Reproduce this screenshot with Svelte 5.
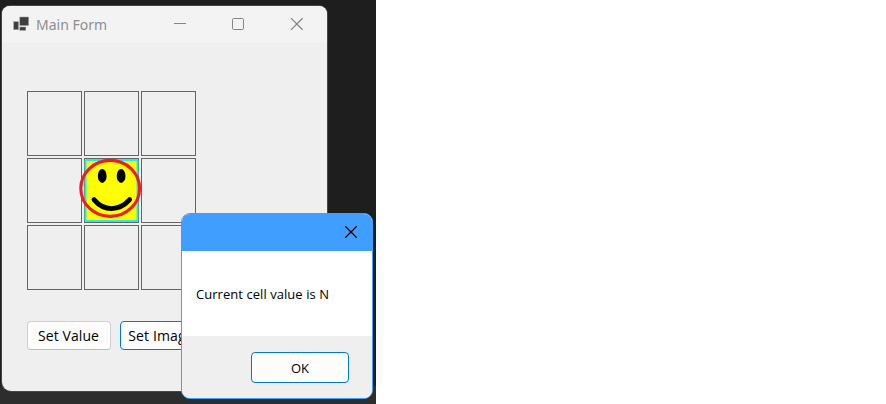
<script>
  const cells = Array.from({ length: 9 }, (_, i) => i);
</script>

<main class="page">
  <div class="desktop">
    <section class="window">
      <header class="titlebar">
        <svg class="appicon" width="17" height="17" viewBox="0 0 17 17">
          <g fill="#3f3f3f" stroke="#a0a0a0" stroke-width=".5">
            <rect x=".7" y="5.7" width="4.8" height="8" />
            <rect x="6.8" y="1" width="8.8" height="8.5" />
            <rect x="6.8" y="11" width="6" height="3.4" />
          </g>
        </svg>
        <span class="title">Main Form</span>
        <svg class="controls" width="130" height="14" viewBox="0 0 130 14" fill="none" stroke="#858585">
          <path d="M1 6.5h12" />
          <rect x="59.5" y="1.5" width="11" height="11" rx="1.2" />
          <path d="M118 1.2l11.6 11.6M129.6 1.2L118 12.8" stroke-width="1.2" />
        </svg>
      </header>
      <div class="grid">
        {#each cells as i}
          <div class="cell">
            {#if i === 4}
              <svg class="face" width="64" height="67" viewBox="0 0 64 67">
                <rect x="7.5" y="3" width="52" height="61" rx="1" fill="#ff0" stroke="#21eee6" stroke-width="2" />
                <ellipse cx="32.2" cy="31.4" rx="29.4" ry="28" fill="none" stroke="#ed1c24" stroke-width="3.1" />
                <ellipse cx="24.2" cy="18.9" rx="4.4" ry="7" />
                <ellipse cx="43.1" cy="18.9" rx="4.4" ry="7" />
                <path d="M16 42.6C26 54.5 41 54.5 51.6 42.6" fill="none" stroke="#000" stroke-width="4.8" stroke-linecap="round" />
              </svg>
            {/if}
          </div>
        {/each}
      </div>
      <div class="actions">
        <button class="set">Set Value</button>
        <button class="set focused">Set Image</button>
      </div>
    </section>

    <section class="dialog">
      <header>
        <svg width="12" height="12" viewBox="0 0 12 12"><path d="M.3 .3l11.4 11.4M11.7 .3L.3 11.7" stroke="#000" stroke-width="1.3" /></svg>
      </header>
      <div class="message"><span>Current cell value is N</span></div>
      <footer><button class="ok">OK</button></footer>
    </section>
  </div>
</main>

<style>
  :global(body) { margin: 0; background: #fff; }
  .page { width: 886px; height: 404px; overflow: hidden; background: #fff; font-family: "Open Sans", "Noto Sans", sans-serif; }
  .desktop { position: relative; box-sizing: border-box; width: 376px; height: 404px; padding: 6px 0 0 2px; background: linear-gradient(#1e1e1e 386px, #2d2d2d 386px); }
  .window { width: 325px; height: 385px; border-radius: 8px 8px 9px 9px; background: #efefef; overflow: hidden; box-shadow: 0 0 0 1px #464646; }
  .titlebar { display: flex; align-items: center; height: 37px; box-sizing: border-box; padding-left: 11px; background: #f3f3f3; }
  .appicon { margin-top: -1px; }
  .title { margin-left: 6px; width: 72px; font-family: "Noto Sans", sans-serif; font-size: 14px; line-height: 20px; color: #8e8e8e; white-space: nowrap; }
  .controls { margin-left: 65px; margin-top: -1px; }
  .grid { display: grid; grid-template-columns: repeat(3, 55px); grid-auto-rows: 65px; gap: 2px; padding: 48px 0 0 25px; }
  .cell { position: relative; box-sizing: border-box; border: 1px solid #646464; }
  .face { position: absolute; left: -7px; top: -2px; z-index: 1; }
  .actions { display: flex; gap: 9px; padding: 31px 0 0 25px; }
  button { box-sizing: border-box; margin: 0; padding: 0; border: 1px solid #0078d4; border-radius: 4px; background: #fdfdfd; color: #000; font-family: inherit; white-space: nowrap; }
  .set { width: 84px; height: 29px; border-color: #d0d0d0; border-bottom-color: #bcbcbc; font-size: 14px; line-height: 27px; letter-spacing: .1px; padding-right: 1px; }
  .focused { border-color: #0078d4; padding-right: 2px; letter-spacing: .15px; }
  .dialog { position: absolute; left: 181px; top: 213px; box-sizing: border-box; width: 192px; height: 186px; border: 1px solid #409eff; border-radius: 9px; overflow: hidden; background: #fff; display: flex; flex-direction: column; }
  .dialog header { box-sizing: border-box; height: 37px; background: #409eff; display: flex; justify-content: flex-end; align-items: center; padding: 0 15px 2px 0; }
  .message { height: 85px; display: flex; align-items: center; padding-left: 14px; font-size: 13px; letter-spacing: .05px; color: #000; white-space: nowrap; }
  footer { flex: 1; background: #efefef; padding: 16px 23px 0 0; display: flex; justify-content: flex-end; align-items: flex-start; }
  .ok { width: 98px; height: 31px; font-size: 13px; line-height: 29px; padding-top: 1px; }
</style>
